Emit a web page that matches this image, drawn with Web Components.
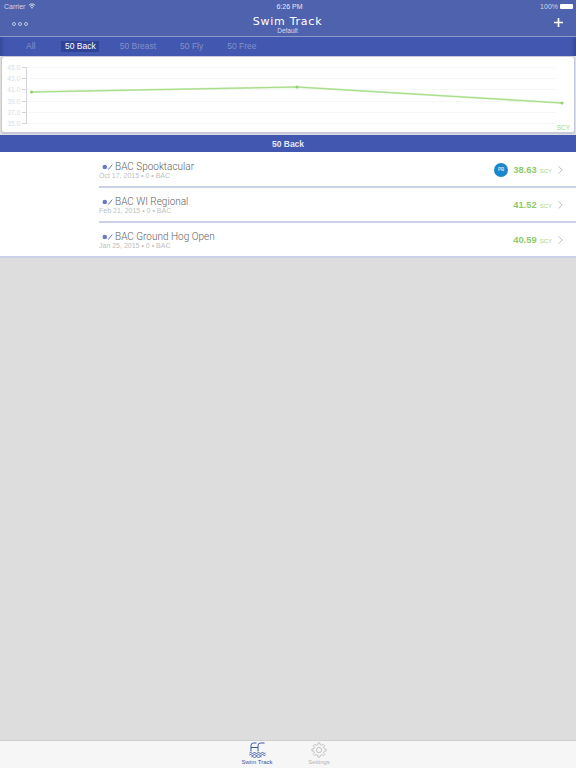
<!DOCTYPE html>
<html>
<head>
<meta charset="utf-8">
<style>
    html, body { margin: 0; height: 100%; background: #dddddd; }
    body { font-family: "Liberation Sans", Arial, sans-serif; }
    swim-app { height: 768px; }
</style>
</head>
<body>
<swim-app>
    <status-bar slot="top"></status-bar>
    <nav-bar slot="top"></nav-bar>
    <segment-bar slot="top" items="All,50 Back,50 Breast,50 Fly,50 Free" active="50 Back"></segment-bar>
    <time-chart></time-chart>
    <section-header>50 Back</section-header>
    <swim-row name="BAC Spooktacular" meta="Oct 17, 2015 • 0 • BAC" time="38.63" pb></swim-row>
    <swim-row name="BAC WI Regional" meta="Feb 21, 2015 • 0 • BAC" time="41.52"></swim-row>
    <swim-row name="BAC Ground Hog Open" meta="Jan 25, 2015 • 0 • BAC" time="40.59" last></swim-row>
    <tab-bar slot="bottom"></tab-bar>
</swim-app>

<script>
class SwimApp extends HTMLElement {
    constructor() {
        super();
        this.attachShadow({ mode: "open" });
        this.shadowRoot.innerHTML = `
            <style>
                :host { display: flex; flex-direction: column; }
                .top { background: #4f62ae; }
                .content { flex: 1; }
            </style>
            <div class="top"><slot name="top"></slot></div>
            <div class="content"><slot></slot></div>
            <slot name="bottom"></slot>
        `;
    }
}

class StatusBar extends HTMLElement {
    constructor() {
        super();
        this.attachShadow({ mode: "open" });
        this.shadowRoot.innerHTML = `
            <style>
                :host {
                    display: grid;
                    grid-template-columns: 1fr auto 1fr;
                    align-items: center;
                    height: 12px;
                    padding: 0 3px 0 4px;
                    color: #e6e9f5;
                    font-size: 7px;
                }
                .left { display: flex; align-items: center; gap: 3px; color: #cfd5ea; }
                .right { display: flex; align-items: center; justify-content: flex-end; gap: 2px; color: #cfd5ea; }
                .clock { padding-left: 2px; }
                .battery { width: 13px; height: 5px; background: #fff; border-radius: 1px; }
            </style>
            <div class="left">
                <span>Carrier</span>
                <svg width="8" height="6" viewBox="0 0 7 6">
                    <path d="M.4 2.2a4.4 4.4 0 0 1 6.200 0M1.500 3.400a2.800 2.800 0 0 1 4 0" fill="none" stroke="#dfe3f2" stroke-width=".9"/>
                    <path d="M3.500 5.800 2.500 4.500a1.400 1.400 0 0 1 2 0z" fill="#dfe3f2"/>
                </svg>
            </div>
            <div class="clock">6:26 PM</div>
            <div class="right"><span>100%</span><div class="battery"></div></div>
        `;
    }
}

class NavBar extends HTMLElement {
    constructor() {
        super();
        this.attachShadow({ mode: "open" });
        this.shadowRoot.innerHTML = `
            <style>
                :host {
                    display: grid;
                    grid-template-columns: 1fr auto 1fr;
                    align-items: center;
                    height: 24px;
                    padding: 0 13px 0 12px;
                    border-bottom: 1px solid #8c98c9;
                    color: #fff;
                }
                .dots { display: flex; gap: 2px; }
                .dots i { width: 2px; height: 2px; border: 1px solid #bcc4e2; border-radius: 50%; }
                .title { text-align: center; }
                .name { font: 11px/13px cursive, "DejaVu Sans", sans-serif; letter-spacing: .75px; padding-top: 1px; }
                .sub { font-size: 6.5px; line-height: 7px; color: #d5daee; margin-top: -1px; }
                .add { justify-self: end; display: flex; margin-top: -3px; }
            </style>
            <div class="dots"><i></i><i></i><i></i></div>
            <div class="title">
                <div class="name">Swim Track</div>
                <div class="sub">Default</div>
            </div>
            <div class="add">
                <svg width="9" height="9" viewBox="0 0 9 9"><path d="M4.500 0v9M0 4.500h9" stroke="#fff" stroke-width="1.700"/></svg>
            </div>
        `;
    }
}

class SegmentBar extends HTMLElement {
    constructor() {
        super();
        this.attachShadow({ mode: "open" });
        const active = this.getAttribute("active");
        const items = this.getAttribute("items").split(",");
        this.shadowRoot.innerHTML = `
            <style>
                :host {
                    display: flex;
                    align-items: center;
                    gap: 17px;
                    height: 19px;
                    padding-left: 22.5px;
                    background: linear-gradient(90deg, #34489b 0, #4257b0 5px, #4257b0 calc(100% - 5px), #34489b 100%);
                    font-size: 8.5px;
                    color: #8391c9;
                }
                span { padding: 0 3.5px; line-height: 11px; }
                span:first-of-type { margin-right: 5.5px; }
                span.on { background: #2f4397; color: #fff; border-radius: 1px; }
            </style>
            ${items.map((i) => `<span class="${i === active ? "on" : ""}">${i}</span>`).join("")}
        `;
    }
}

class TimeChart extends HTMLElement {
    constructor() {
        super();
        this.attachShadow({ mode: "open" });
        // the svg viewBox is in page coordinates, easier to compare with the reference
        const labels = [["45.0", 67.5], ["43.0", 78.5], ["41.0", 89.5], ["39.0", 101.5], ["37.0", 112.5], ["35.0", 123.5]];
        this.shadowRoot.innerHTML = `
            <style>
                :host {
                    display: block;
                    height: 78px;
                    box-sizing: border-box;
                    margin: 0 1px 1px;
                    background: #fff;
                    border: solid #c6c9de;
                    border-width: 1px 1px 2px;
                    border-radius: 4px;
                }
                svg { display: block; }
                text { font-family: "Liberation Sans", Arial, sans-serif; font-size: 6.5px; fill: #dcdcdc; }
            </style>
            <svg width="572" height="75" viewBox="2 57 572 75">
                ${labels.map(([t, y]) => `
                    <line x1="26" x2="556" y1="${y}" y2="${y}" stroke="#f7f7f7" stroke-width="1"/>
                    <line x1="22" x2="26.5" y1="${y}" y2="${y}" stroke="#d5d5d5" stroke-width="1"/>
                    <text x="20" y="${y + 2}" text-anchor="end">${t}</text>
                `).join("")}
                <line x1="26.5" x2="26.5" y1="67" y2="124" stroke="#d5d5d5" stroke-width="1"/>
                <polyline points="31.5,92 297,87 562,103" fill="none" stroke="#d3eec4" stroke-width="2"/>
                <polyline points="31.5,92 297,87 562,103" fill="none" stroke="#a5dc85" stroke-width="1"/>
                <circle cx="31.5" cy="92" r="1.500" fill="#8fd26c"/>
                <circle cx="297" cy="87" r="1.500" fill="#8fd26c"/>
                <circle cx="562" cy="103" r="1.500" fill="#8fd26c"/>
                <text x="570" y="130" text-anchor="end" style="fill:#9fd884">SCY</text>
            </svg>
        `;
    }
}

class SectionHeader extends HTMLElement {
    constructor() {
        super();
        this.attachShadow({ mode: "open" });
        this.shadowRoot.innerHTML = `
            <style>
                :host {
                    display: flex;
                    align-items: center;
                    justify-content: center;
                    height: 17px;
                    background: #4257b0;
                    color: #e3e6f4;
                    font-size: 8.5px;
                    font-weight: bold;
                }
            </style>
            <slot></slot>
        `;
    }
}

class SwimRow extends HTMLElement {
    constructor() {
        super();
        this.attachShadow({ mode: "open" });
        const pb = this.hasAttribute("pb") ? `<div class="pb">PB</div>` : "";
        this.shadowRoot.innerHTML = `
            <style>
                :host { display: block; background: #fff; }
                :host(:first-of-type) { padding-top: 1px; }
                :host([last]) { border-bottom: 2px solid #ccd0e8; }
                :host(:not([last])) .row { border-bottom: 2px solid #ccd0e8; }
                .row {
                    display: flex;
                    align-items: center;
                    box-sizing: border-box;
                    height: 35px;
                    margin-left: 99px;
                    padding-right: 13px;
                }
                :host([last]) .row { height: 33px; }
                .info { flex: 1; min-width: 0; }
                .title {
                    display: flex;
                    align-items: center;
                    gap: 2px;
                    padding: 2px 0 0 3px;
                    color: #5f5f5f;
                    font: 300 10px/12px Roboto, "Liberation Sans", sans-serif;
                }
                .meta { color: #c0c0c0; font-size: 7px; line-height: 8px; margin-top: -1px; }
                .pb {
                    width: 14px;
                    height: 14px;
                    border-radius: 50%;
                    background: #1b86c9;
                    color: #cfe6f5;
                    font-size: 4.5px;
                    font-weight: bold;
                    text-align: center;
                    line-height: 14px;
                    margin-right: 5px;
                }
                .time { color: #8ccb6b; font-size: 9.4px; font-weight: bold; }
                .unit { color: #a5d68c; font-size: 6px; margin: 2px 6px 0 3px; }
            </style>
            <div class="row">
                <div class="info">
                    <div class="title">
                        <svg width="11" height="6" viewBox="0 0 11 6">
                            <circle cx="2.800" cy="3" r="2.300" fill="#6d78c4"/>
                            <path d="M5.800 4.800 6.500 5.300 10.300.6" stroke="#6d78c4" stroke-width="1" fill="none"/>
                        </svg>
                        <span>${this.getAttribute("name")}</span>
                    </div>
                    <div class="meta">${this.getAttribute("meta")}</div>
                </div>
                ${pb}
                <span class="time">${this.getAttribute("time")}</span>
                <span class="unit">SCY</span>
                <svg width="5" height="8" viewBox="0 0 5 8"><path d="M.7.5l3.500 3.500-3.500 3.500" fill="none" stroke="#bdbdbd"/></svg>
            </div>
        `;
    }
}

// outline of a toothed gear, for the settings tab
function gearPath(cx, cy, outer, inner, teeth) {
    const pts = [];
    for (let i = 0; i < teeth; i++) {
        const step = (Math.PI * 2) / teeth;
        const a = i * step - Math.PI / 2;
        [[-0.3, inner], [-0.16, outer], [0.16, outer], [0.3, inner]].forEach(([f, r]) => {
            const t = a + f * step;
            pts.push(`${(cx + r * Math.cos(t)).toFixed(2)} ${(cy + r * Math.sin(t)).toFixed(2)}`);
        });
    }
    return `M${pts.join("L")}z`;
}

class TabBar extends HTMLElement {
    constructor() {
        super();
        this.attachShadow({ mode: "open" });
        this.shadowRoot.innerHTML = `
            <style>
                :host {
                    display: flex;
                    justify-content: center;
                    gap: 24px;
                    height: 28px;
                    box-sizing: border-box;
                    background: #f6f6f6;
                    border-top: 1px solid #cfcfcf;
                    font-size: 6px;
                }
                .tab { width: 38px; display: flex; flex-direction: column; align-items: center; color: #b5b5b5; padding-top: 1px; }
                .tab.on { color: #3f55a8; }
                svg { display: block; }
                span { line-height: 7px; margin-top: 1px; }
            </style>
            <div class="tab on">
                <svg width="17" height="16" viewBox="0 0 17 16" fill="none" stroke="#3f55a8" stroke-width="1">
                    <path d="M2 9.500V3.500Q2 1 4.500 1H7.500M9 9.500V3.500Q9 1 11.500 1H15.500M2 5.500H9"/>
                    <path d="M.5 11q1-.9 2 0t2 0 2 0 2 0 2 0 2 0 2 0 2 0M.5 13q1-.9 2 0t2 0 2 0 2 0 2 0 2 0 2 0 2 0M2.500 15q1-.9 2 0t2 0 2 0 2 0 2 0"/>
                </svg>
                <span>Swim Track</span>
            </div>
            <div class="tab">
                <svg width="16" height="16" viewBox="0 0 16 16" fill="none" stroke="#b8b8b8" stroke-width=".8">
                    <circle cx="8" cy="8" r="2.600"/>
                    <path d="${gearPath(8, 8, 7.2, 5.4, 8)}"/>
                </svg>
                <span>Settings</span>
            </div>
        `;
    }
}

customElements.define("swim-app", SwimApp);
customElements.define("status-bar", StatusBar);
customElements.define("nav-bar", NavBar);
customElements.define("segment-bar", SegmentBar);
customElements.define("time-chart", TimeChart);
customElements.define("section-header", SectionHeader);
customElements.define("swim-row", SwimRow);
customElements.define("tab-bar", TabBar);
</script>
</body>
</html>
